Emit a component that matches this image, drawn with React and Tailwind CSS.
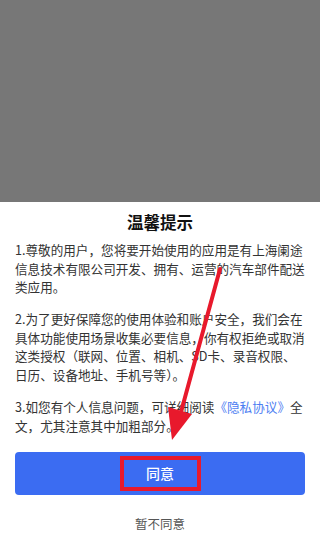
export default function App() {
    const font = { fontFamily: '"Noto Sans CJK SC", "Noto Sans", sans-serif' };

    return (
        <div className="relative w-[320px] h-[545px] overflow-hidden bg-white" style={font}>
            {/* dimmed page behind the dialog */}
            <div className="h-[202px] bg-[#777777]"></div>

            {/* Privacy sheet */}
            <div className="flex flex-col px-[15px]">
                <h2 className="mt-[7px] text-center text-[16.5px] leading-[26px] font-bold text-[#111111]">温馨提示</h2>

                <div className="mt-[6px] w-[291px] text-[12.6px] leading-[18.5px] text-[#333333]">
                    <p>1.尊敬的用户，您将要开始使用的应用是有上海阑途信息技术有限公司开发、拥有、运营的汽车部件配送类应用。</p>
                    <p className="mt-[13.5px]">2.为了更好保障您的使用体验和账户安全，我们会在具体功能使用场景收集必要信息，你有权拒绝或取消这类授权（联网、位置、相机、SD卡、录音权限、日历、设备地址、手机号等）。</p>
                    <p className="mt-[14px]">
                        3.如您有个人信息问题，可详细阅读<span className="text-[#4d7ef2]">《隐私协议》</span>全文，尤其注意其中加粗部分。
                    </p>
                </div>

                <button className="mt-[17px] h-[43px] w-full rounded-[4px] bg-[#3b6cf2] flex items-center justify-center">
                    <span className="w-[81px] h-[35px] border-[4px] border-[#e8192c] flex items-center justify-center text-[14px] font-medium text-white">
                        同意
                    </span>
                </button>

                <div className="mt-[19px] text-center text-[12.5px] leading-[20px] text-[#555555]">暂不同意</div>
            </div>

            {/* annotation arrow */}
            <svg className="absolute inset-0 pointer-events-none" width="320" height="545" viewBox="0 0 320 545">
                <line x1="220" y1="269" x2="181" y2="412" stroke="#e8192c" strokeWidth="4" strokeLinecap="round" />
                <polygon points="172,440 168,407 192,414" fill="#e8192c" />
            </svg>
        </div>
    );
}
